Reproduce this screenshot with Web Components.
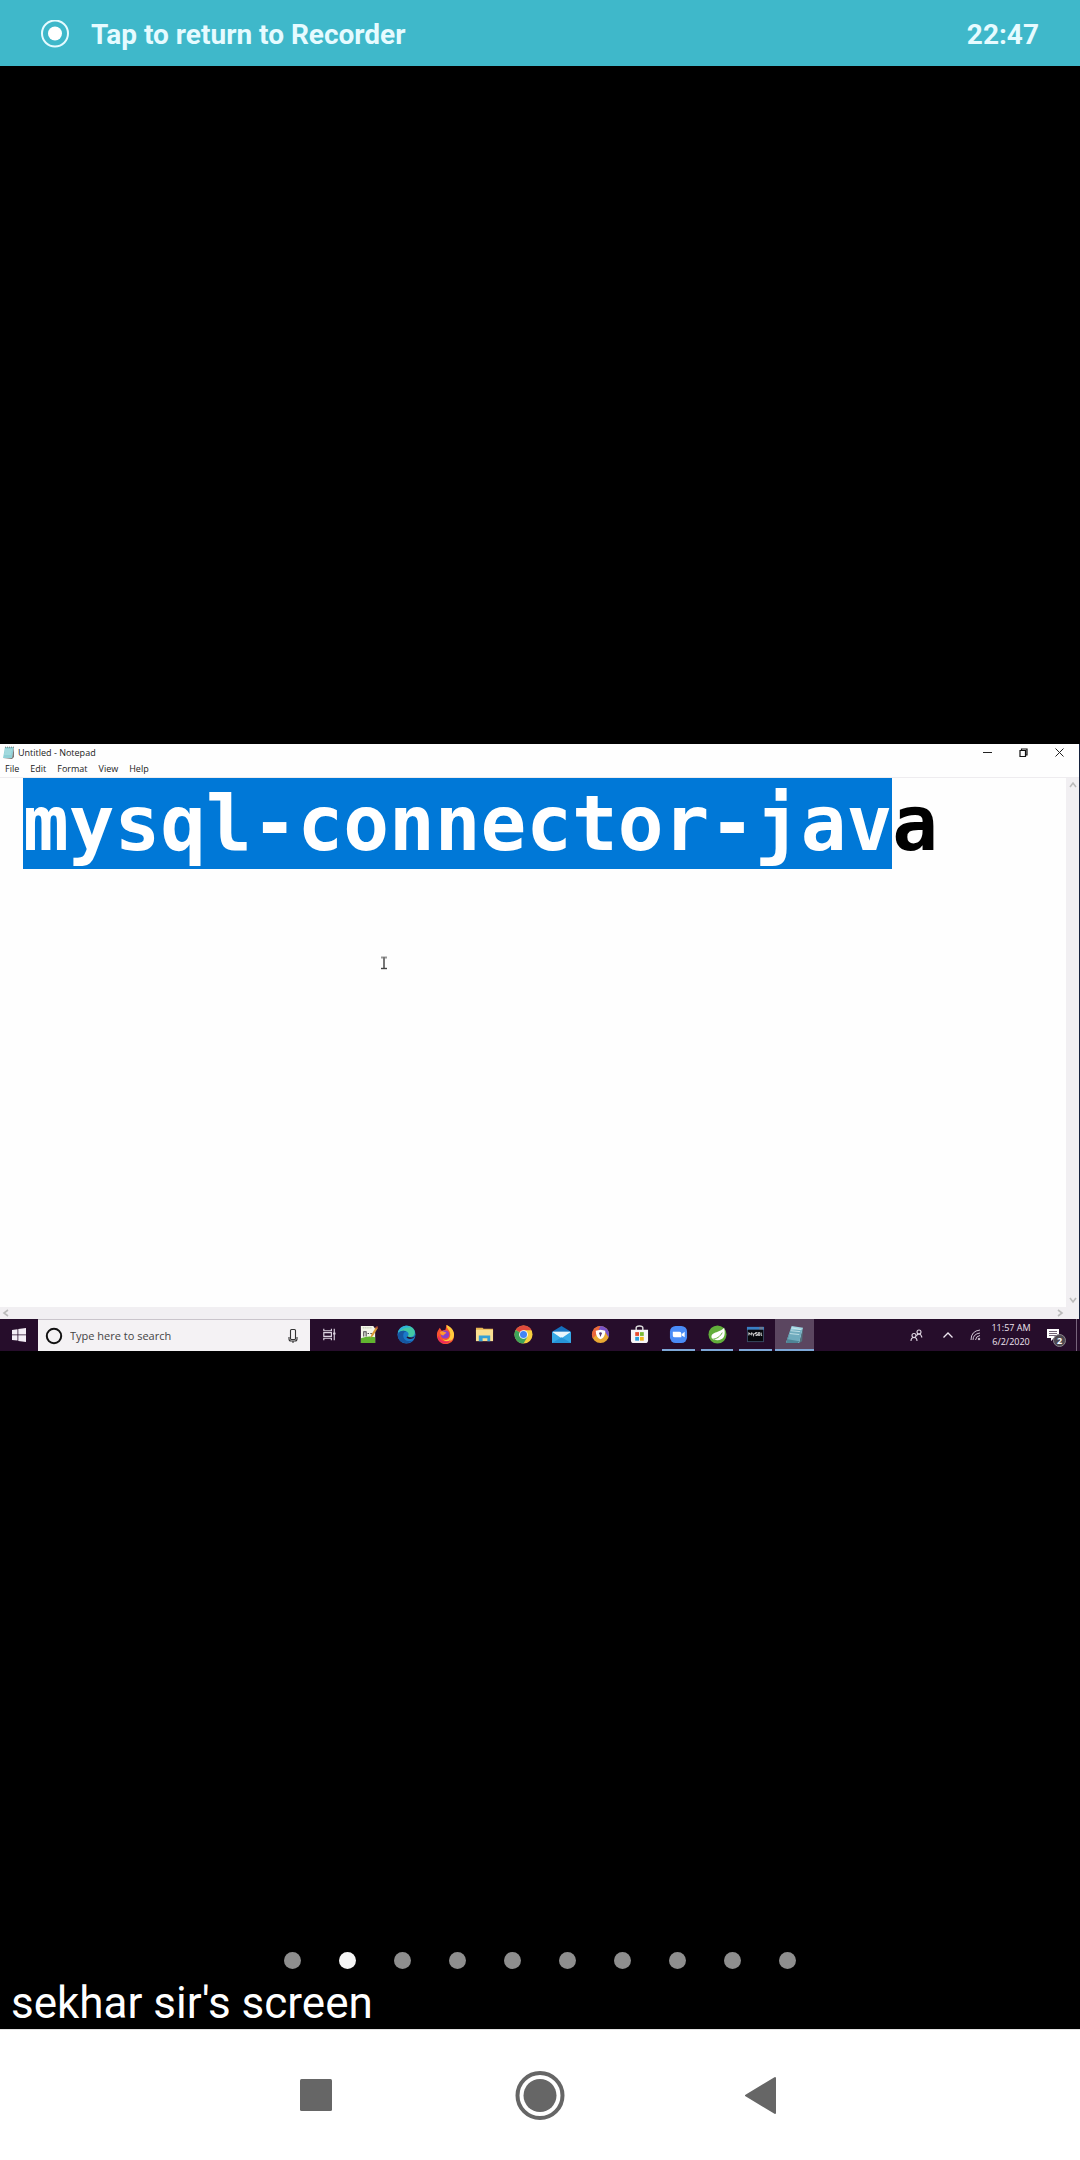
<!DOCTYPE html>
<html lang="en">
<head>
<meta charset="utf-8">
<meta name="viewport" content="width=device-width, initial-scale=1">
<title>Screen share</title>
<style>
html, body { margin: 0; background: #000; }
body { min-height: 100vh; display: flex; flex-direction: column; font-family: Roboto, sans-serif; }
meeting-view { flex: 1; }
</style>
</head>
<body>
<recorder-bar time="22:47">Tap to return to Recorder</recorder-bar>
<meeting-view>
  <shared-desktop slot="screen">
    <notepad-window heading="Untitled - Notepad" text="mysql-connector-java" selected="19"></notepad-window>
    <task-bar></task-bar>
  </shared-desktop>
  <page-dots slot="overlay" count="10" current="2"></page-dots>
  <span slot="caption">sekhar sir's screen</span>
</meeting-view>
<phone-nav></phone-nav>

<script>
const reset = `<style>
*{box-sizing:border-box}
button{appearance:none;border:0;padding:0;margin:0;background:none;color:inherit;font:inherit;display:flex;align-items:center;justify-content:center}
svg{display:block;flex:none}
</style>`;

class BaseElement extends HTMLElement {
  connectedCallback() {
    this.attachShadow({ mode: 'open' }).innerHTML = reset + this.render();
    this.ready();
  }
  ready() {}
}

customElements.define('recorder-bar', class extends BaseElement {
  render() {
    return `<style>
    :host{display:block;background:#3fb8ca;color:#e6fbff;font-size:28px;line-height:32px;font-weight:700}
    .bar{display:flex;justify-content:space-between;align-items:center;height:66px;padding:3px 41px 0 40px}
    button{gap:21px}
    </style>
    <div class="bar"><button type="button">
      <svg width="30" height="30" viewBox="0 0 30 30"><circle cx="15" cy="13.500" r="13" fill="none" stroke="#e6fbff" stroke-width="2"/><circle cx="15" cy="13.500" r="7" fill="#fff"/></svg>
      <span><slot></slot></span></button><time>${this.getAttribute('time')}</time></div>`;
  }
});

customElements.define('meeting-view', class extends BaseElement {
  render() {
    return `<style>
    :host{display:grid;grid-template-rows:1fr auto 1fr;background:#000;color:#fff}
    .bottom{display:flex;flex-direction:column;justify-content:flex-end;gap:8px}
    .caption{padding:0 11px;font-size:44px;line-height:52px}
    </style>
    <div></div><slot name="screen"></slot>
    <div class="bottom"><slot name="overlay"></slot><div class="caption"><slot name="caption"></slot></div></div>`;
  }
});

customElements.define('shared-desktop', class extends BaseElement {
  render() {
    return `<style>
    :host{display:flex;flex-direction:column;aspect-ratio:16/9;position:relative;font-family:"Open Sans","Noto Sans",sans-serif}
    ::slotted(notepad-window){flex:1}
    .pointer{position:absolute;left:35.2%;top:35%}
    </style><slot></slot>
    <svg class="pointer" width="8" height="14" viewBox="0 0 8 14" fill="none"><path d="M1 1.500h6" stroke="#999" stroke-width="2"/><path d="M4 1v12" stroke="#777" stroke-width="2"/><path d="M1 12.500h6" stroke="#444" stroke-width="1.400"/></svg>`;
  }
});

customElements.define('notepad-window', class extends BaseElement {
  render() {
    const chevron = (d, label) => `<button type="button" aria-label="${label}"><svg width="8" height="8" viewBox="0 0 8 8" fill="none" stroke="#bbb" stroke-width="1.600"><path d="${d}"/></svg></button>`;
    return `<style>
    :host{display:flex;flex-direction:column;background:#fefefe;color:#222;border-right:1px solid #14213d;font-size:9px;line-height:16px}
    header{display:flex;align-items:center;height:18px;padding-left:2px;gap:3px}
    .controls{margin-left:auto;display:flex;padding-right:2px}
    .controls button{width:36px;height:16px}
    nav{display:flex;gap:11px;height:16px;padding:0 5px;border-bottom:1px solid #eeecef}
    .body{flex:1;display:grid;grid-template:1fr 12px / 1fr 13px}
    textarea{display:block;width:100%;height:100%;border:0;outline:0;resize:none;margin:0;padding:0 0 0 23px;background:#fefefe;color:#000;caret-color:transparent;overflow:hidden;
      font:700 76px/91px "DejaVu Sans Mono",monospace}
    textarea::selection{background:#0078d7;color:#fff}
    .v,.h{display:flex;justify-content:space-between;align-items:center;background:#f1eff2}
    .v{flex-direction:column;padding:3px 0}
    .h{padding:0 2px}
    .corner{background:#f1eff2}
    </style>
    <header>
      <svg width="13" height="13" viewBox="0 0 13 13"><path d="M3 1h9l-2 11H1z" fill="#8fd0d6"/><path d="M12 1v10l-2 2H1l9-1z" fill="#777"/><path d="M3 1.200h9" stroke="#777" stroke-dasharray="1 1"/><path d="M3 4h7M2.600 6h7M2.200 8h7" stroke="#bde7ea" stroke-width=".8"/></svg>
      <span>${this.getAttribute('heading')}</span>
      <div class="controls">
        <button type="button" aria-label="Minimize"><svg width="9" height="9" viewBox="0 0 9 9"><path d="M0 4.500h9" stroke="#222"/></svg></button>
        <button type="button" aria-label="Restore"><svg width="9" height="9" viewBox="0 0 9 9" fill="none" stroke="#111" stroke-width="1.200"><path d="M1 2.500h5.500v6H1zM2.500 2.500V1H8v6H6.500"/></svg></button>
        <button type="button" aria-label="Close"><svg width="9" height="9" viewBox="0 0 9 9"><path d="M.5.5l8 8M8.500.5l-8 8" stroke="#222"/></svg></button>
      </div>
    </header>
    <nav>${['File', 'Edit', 'Format', 'View', 'Help'].map(t => `<button type="button">${t}</button>`).join('')}</nav>
    <div class="body">
      <textarea aria-label="Document text" spellcheck="false">${this.getAttribute('text')}</textarea>
      <div class="v">${chevron('M1 6l3-4 3 4', 'Scroll up')}${chevron('M1 2l3 4 3-4', 'Scroll down')}</div>
      <div class="h">${chevron('M6 1L2 4l4 3', 'Scroll left')}${chevron('M2 1l4 3-4 3', 'Scroll right')}</div>
      <div class="corner"></div>
    </div>`;
  }
  ready() {
    const area = this.shadowRoot.querySelector('textarea');
    area.focus({ preventScroll: true });
    area.setSelectionRange(0, Number(this.getAttribute('selected')));
  }
});

const apps = [
  ['Task View', `<g fill="none" stroke="#ded5e2" stroke-width="1.200"><path d="M4 4v2h8V4M4 16v-2h8v2M4 8h8v4H4zM15 4v12"/><path d="M13.800 9h2.500" stroke-width="2"/></g>`],
  ['Notepad++', `<path d="M2 1h13l2 3v15H2z" fill="#f3f6e9"/><path d="M2 14q8-3 15-1v6H2z" fill="#61b52f"/><path d="M4 3h9" stroke="#9aa88e" stroke-dasharray="1 1"/><path d="M5 12V7h2.500v5M9 9h1.500M12 9h1.500" stroke="#444" stroke-width="1.100" fill="none"/><path d="M12 14l1-4 5-8 2 1-5 8z" fill="#d99a34"/><path d="M17 3l2-2 1 1-1 2z" fill="#ae4b34"/>`],
  ['Edge', `<circle cx="10" cy="10" r="9.500" fill="#1a79c9"/><path d="M1 8C3 0 14-2 18 5c3 6-3 9-7 7 3-3 0-6-4-6C4 6 2 7 1 8z" fill="#43c8a5"/><path d="M1 8C3 1 11-1 15 3c-5-1-10 1-14 5z" fill="#2eb2da"/><path d="M7 9c-2 5 3 10 10 7-6 6-17 3-16-6 1-4 6-5 9-3-2 0-3 1-3 2z" fill="#1656a1"/><path d="M11 12c4 2 7 1 8-1-1 4-7 5-9 2z" fill="#26112c"/>`],
  ['Firefox', `<path d="M2 6l2-3 2 3 4-1 1-5c4 2 8 6 8 11 0 6-4 9-9 9s-9-4-9-9c0-2 0-3 1-5z" fill="#f9522f"/><path d="M11 0c0 4 4 5 4 10 0 5-4 7-8 5 5 5 12 2 12-5 0-4-3-8-8-10z" fill="#ffcb3d"/><path d="M3 11c1 7 9 8 13 4-3 6-13 6-14-2z" fill="#ec295f"/><circle cx="9.500" cy="10" r="4.300" fill="#8940c9"/><path d="M4 8c3-3 5 0 7 0-1 2-3 2-3 3-2 0-3-1-4-3z" fill="#ff9a2c"/>`],
  ['File Explorer', `<path d="M1 3h7l1 1h10v4H1z" fill="#e8b652"/><path d="M1 5h18v12H1z" fill="#fbdf91"/><path d="M4 17v-6h12v6h-3v-3H8v3z" fill="#35a0d7"/>`],
  ['Chrome', `<circle cx="10" cy="10" r="9.500" fill="#f8cf3f"/><path d="M10 10L1.800 5.200A9.500 9.500 0 0 1 18.500 5.600H10z" fill="#df4a3c"/><path d="M1.800 5.200A9.500 9.500 0 0 0 10 19.500l4-7z" fill="#3fa45a"/><circle cx="10" cy="10" r="4.600" fill="#fff"/><circle cx="10" cy="10" r="3.700" fill="#4285f4"/>`],
  ['Mail', `<path d="M0 7l10-6 10 6v12H0z" fill="#1470bd"/><path d="M1 7h18v8H1z" fill="#e8f6fc"/><path d="M0 7l10 7 10-7v12H0z" fill="#36a9e6"/><path d="M0 19l10-6 10 6z" fill="#2694d8"/>`],
  ['Secure Browser', `<circle cx="10" cy="10" r="9" fill="#e9a933"/><path d="M2 14A9 9 0 0 1 10 1l-1 6z" fill="#ea663c"/><path d="M10 1a9 9 0 0 1 8.500 12L14 6 8 5z" fill="#7952c8"/><path d="M5 6l5-1 5 1c0 5-2 8-5 9-3-1-5-4-5-9z" fill="#fff"/><circle cx="10" cy="9" r="1.500" fill="#5a3b72"/><path d="M9.400 9h1.200v3H9.400z" fill="#5a3b72"/>`],
  ['Microsoft Store', `<path d="M6.500 6V3q0-2 3.500-2t3.500 2v3" stroke="#ddd" stroke-width="1.500" fill="none"/><path d="M1 5h18v11q0 3-3 3H4q-3 0-3-3z" fill="#f8f5f7"/><path d="M5.500 7.500h4v4h-4z" fill="#e64a2d"/><path d="M10.500 7.500h4v4h-4z" fill="#7bb834"/><path d="M5.500 12.500h4v4h-4z" fill="#2a9fdb"/><path d="M10.500 12.500h4v4h-4z" fill="#f2b51d"/>`],
  ['Zoom', `<rect x="1" y="1" width="18" height="18" rx="6" fill="#4a8cf7"/><path d="M4 7h7q2 0 2 2v4H6q-2 0-2-2zM13.500 9.500L16.500 7v6l-3-2z" fill="#fff"/>`, 1],
  ['Spring Tool Suite', `<circle cx="10" cy="10" r="9.500" fill="#62ae3b"/><path d="M17 3c2 9-1 13-7 13-3 0-5 0-6-2C2 7 12 9 17 3z" fill="#fff"/><path d="M4 15c5 0 9-3 11-7" stroke="#62ae3b" fill="none"/>`, 1],
  ['MySQL Command Line', `<path d="M1 2h18v16H1z" fill="#3a4a63"/><path d="M1 2h18v3H1z" fill="#397fc5"/><path d="M14 2h4v3h-4z" fill="#6c7a91"/><path d="M2 5h16v12H2z" fill="#07080d"/><path d="M3 11V8l1.500 2L6 8v3M7 8.500l1 2 1-2M8 10.500V12M12 8h-2v1.500h2V11h-2M14.500 8H13v3h1.500zM16 8v3h1" stroke="#eee" stroke-width=".9" fill="none"/>`, 1],
  ['Notepad', `<path d="M7 1l12 2-4 16H1z" fill="#9fd6e2"/><path d="M19 3l-1 14-3 2z" fill="#51727d"/><path d="M6 5L2 16l13 2 3-13z" fill="#6fabbd"/><path d="M7 1L3 15l12 2-1 2H1z" fill="#4f8496"/><path d="M7 3l10 2M6 6l10 1M5 9l10 1" stroke="#d4edf0" stroke-width=".8"/>`, 2],
];

customElements.define('task-bar', class extends BaseElement {
  render() {
    return `<style>
    :host{display:grid;grid-template-columns:38px 272px 504px 1fr;height:32px;background:#260d2b;color:#eee5f0}
    .search{display:flex;align-items:center;background:#f4f2f4;padding:0 10px 0 7px;gap:7px;border-top:1px solid #c9c4cb}
    input{flex:1;min-width:0;border:0;outline:0;background:none;padding:0;height:24px;font:11px/24px "Open Sans","Noto Sans",sans-serif}
    input::placeholder{color:#444;opacity:1}
    .apps{display:grid;grid-auto-flow:column;grid-auto-columns:1fr}
    .apps button{border-bottom:2px solid transparent;margin:0 3px}
    .apps .running{border-color:#7da7d6}
    .apps .active{border-color:#7da7d6;background:#5b4660;margin:0}
    .tray{display:flex;align-items:center;justify-content:flex-end;padding-right:3px}
    .tray>button{height:32px}
    .people{width:44px}
    .more{width:20px}
    .network{width:34px}
    time{font-size:9px;line-height:14px;width:38px;display:flex;flex-direction:column;align-items:center;white-space:nowrap}
    .tray .notes{position:relative;width:46px}
    .badge{position:absolute;left:23px;top:15px;width:13px;height:13px;border-radius:50%;background:#4d4850;border:1px solid #8a848c;color:#fff;font-size:9px;line-height:11px;font-weight:700}
    .edge{width:1px;height:32px;background:#77647c}
    </style>
    <button type="button" aria-label="Start"><svg width="14" height="14" viewBox="0 0 14 14" fill="#f3edf5"><path d="M0 2l5.500-.8v5.300H0zM6.300 1L14 0v6.500H6.300zM0 7.300h5.500v5.300L0 12zM6.300 7.300H14V14l-7.700-1.100z"/></svg></button>
    <label class="search">
      <svg width="18" height="18" viewBox="0 0 18 18"><circle cx="9" cy="9" r="7.200" fill="none" stroke="#111" stroke-width="2"/></svg>
      <input type="text" placeholder="Type here to search" aria-label="Search">
      <svg width="14" height="16" viewBox="0 0 14 16" fill="none" stroke="#333" stroke-width="1.100"><rect x="4.500" y="1.500" width="5" height="10" rx="1"/><path d="M3 9v2q0 2 2 2h4q2 0 2-2V9M7 13v2"/></svg>
    </label>
    <div class="apps">${apps.map(([name, art, state]) => `<button type="button" aria-label="${name}" class="${['', 'running', 'active'][state || 0]}"><svg width="19" height="19" viewBox="0 0 20 20">${art}</svg></button>`).join('')}</div>
    <div class="tray">
      <button type="button" class="people" aria-label="People"><svg width="13" height="13" viewBox="0 0 13 13" fill="none" stroke="#e0d6e3" stroke-width="1.100"><circle cx="4" cy="6.500" r="2"/><path d="M1 12q0-3.500 3-3.500T7 12"/><circle cx="9" cy="3" r="2"/><path d="M6.500 7q.5-2 2.500-2t3 3.500"/></svg></button>
      <button type="button" class="more" aria-label="Show hidden icons"><svg width="10" height="6" viewBox="0 0 10 6" fill="none" stroke="#eee5f0" stroke-width="1.300"><path d="M.5 5.500L5 1l4.500 4.500"/></svg></button>
      <button type="button" class="network" aria-label="Network"><svg width="11" height="12" viewBox="0 0 11 12" fill="none" stroke="#cfc3d3"><path d="M1 11Q1 2 10 1M3 11q0-6 7-7M5.500 11Q6 7 10 6.500"/><circle cx="9" cy="10" r=".8" fill="#fff"/></svg></button>
      <time><span>11:57 AM</span><span>6/2/2020</span></time>
      <button type="button" class="notes" aria-label="Notifications"><svg width="14" height="14" viewBox="0 0 14 14"><path d="M1 1h12v9H8l-3 3v-3H1z" fill="#fff"/><path d="M3 3.500h8M3 5.500h8M3 7.500h8" stroke="#625368" stroke-width=".9"/></svg><span class="badge">2</span></button>
      <span class="edge"></span>
    </div>`;
  }
});

customElements.define('page-dots', class extends BaseElement {
  render() {
    const current = Number(this.getAttribute('current'));
    const dots = Array.from({ length: Number(this.getAttribute('count')) }, (_, i) =>
      `<button type="button" aria-label="Page ${i + 1}"${i + 1 === current ? ' aria-current="page"' : ''}></button>`);
    return `<style>
    :host{display:flex;justify-content:center;gap:38px}
    button{width:17px;height:17px;border-radius:50%;background:#8e8e8e}
    button[aria-current]{background:#f5f5f5}
    </style>${dots.join('')}`;
  }
});

customElements.define('phone-nav', class extends BaseElement {
  render() {
    return `<style>
    :host{display:flex;justify-content:center;gap:112px;height:130px;background:#fff;border-top:1px solid #e4e4e4;color:#666}
    button{width:110px;height:130px}
    </style>
    <button type="button" aria-label="Recent apps"><svg width="54" height="54" viewBox="0 0 54 54" fill="currentColor"><rect x="9" y="11" width="32" height="32" rx="1.500"/></svg></button>
    <button type="button" aria-label="Home"><svg width="54" height="54" viewBox="0 0 54 54"><circle cx="27" cy="27.500" r="22.500" fill="none" stroke="currentColor" stroke-width="4"/><circle cx="27" cy="27.500" r="16.500" fill="currentColor"/></svg></button>
    <button type="button" aria-label="Back"><svg width="54" height="54" viewBox="0 0 54 54" fill="currentColor" stroke="currentColor" stroke-width="2" stroke-linejoin="round"><path d="M11 27.500L40 10v35z"/></svg></button>`;
  }
});
</script>
</body>
</html>
